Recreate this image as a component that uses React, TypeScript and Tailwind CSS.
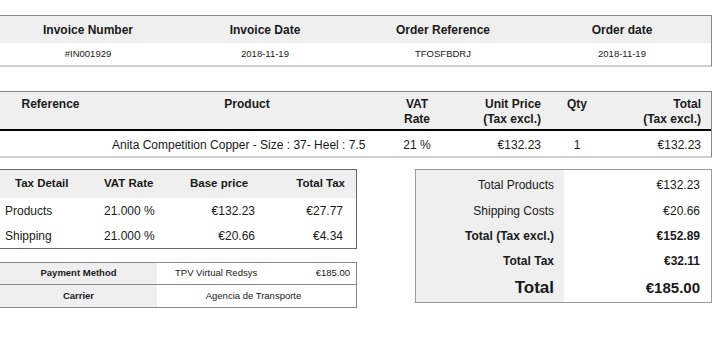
const font = "font-['Liberation_Sans','Arial',sans-serif]"

function InvoiceHeader() {
  const cols = ['Invoice Number', 'Invoice Date', 'Order Reference', 'Order date']
  const vals = ['#IN001929', '2018-11-19', 'TFOSFBDRJ', '2018-11-19']
  return (
    <div className="w-[712px] border-t border-r border-[#888] border-b-2 border-b-[#cfcfcf]">
      <div className="grid grid-cols-[176px_178px_178px_180px] h-[27px] items-center bg-[#efefef] text-[12px] font-bold text-center">
        {cols.map((c) => (
          <div key={c}>{c}</div>
        ))}
      </div>
      <div className="grid grid-cols-[176px_178px_178px_180px] h-[22px] items-center text-[9.5px] text-center">
        {vals.map((v, i) => (
          <div key={i}>{v}</div>
        ))}
      </div>
    </div>
  )
}

function ProductTable() {
  const grid = 'grid grid-cols-[101px_292px_48px_110px_52px_109px]'
  return (
    <div className="mt-[24px] w-[712px] border-t border-r border-[#888] border-b-2 border-b-[#cfcfcf]">
      <div className={`${grid} h-[39px] bg-[#efefef] pt-[5px] text-[12px] font-bold leading-[15px] border-b-2 border-black`}>
        <div className="text-center">Reference</div>
        <div className="text-center">Product</div>
        <div className="text-center">
          VAT
          <br />
          Rate
        </div>
        <div className="text-right pr-[10px]">
          Unit Price
          <br />
          (Tax excl.)
        </div>
        <div className="text-center">Qty</div>
        <div className="text-right pr-[11px]">
          Total
          <br />
          (Tax excl.)
        </div>
      </div>
      <div className={`${grid} h-[25px] pt-[2px] items-center text-[12px]`}>
        <div />
        <div className="pl-[11px] whitespace-nowrap">Anita Competition Copper - Size : 37- Heel : 7.5</div>
        <div className="text-center">21 %</div>
        <div className="text-right pr-[10px]">€132.23</div>
        <div className="text-center">1</div>
        <div className="text-right pr-[11px]">€132.23</div>
      </div>
    </div>
  )
}

function TaxTable() {
  const grid = 'grid grid-cols-[90px_90px_85px_91px]'
  const rows = [
    ['Products', '21.000 %', '€132.23', '€27.77'],
    ['Shipping', '21.000 %', '€20.66', '€4.34'],
  ]
  return (
    <div className="w-[357px] border border-l-0 border-[#666]">
      <div className={`${grid} h-[28px] items-center bg-[#efefef] text-[11.5px] font-bold`}>
        <div className="pl-[15px]">Tax Detail</div>
        <div className="pl-[14px]">VAT Rate</div>
        <div className="pl-[10px]">Base price</div>
        <div className="text-right pr-[11px]">Total Tax</div>
      </div>
      {rows.map((r) => (
        <div key={r[0]} className={`${grid} h-[25px] items-center text-[12px]`}>
          <div className="pl-[5px]">{r[0]}</div>
          <div className="pl-[14px]">{r[1]}</div>
          <div className="text-right pr-[10px]">{r[2]}</div>
          <div className="text-right pr-[13px]">{r[3]}</div>
        </div>
      ))}
    </div>
  )
}

function PaymentTable() {
  return (
    <div className="mt-[13px] w-[357px] border border-l-0 border-[#888] text-[9.5px]">
      <div className="grid grid-cols-[157px_199px] h-[22px] border-b border-[#888]">
        <div className="flex items-center justify-center bg-[#efefef] font-bold">Payment Method</div>
        <div className="flex items-center justify-between pl-[18px] pr-[6px]">
          <span>TPV Virtual Redsys</span>
          <span>€185.00</span>
        </div>
      </div>
      <div className="grid grid-cols-[157px_199px] h-[22px]">
        <div className="flex items-center justify-center bg-[#efefef] font-bold">Carrier</div>
        <div className="flex items-center justify-center pr-[6px]">Agencia de Transporte</div>
      </div>
    </div>
  )
}

function Totals() {
  const rows = [
    { label: 'Total Products', value: '€132.23', h: 'h-[28px] pt-[2px]', l: 'text-[12px]', v: 'text-[12px]' },
    { label: 'Shipping Costs', value: '€20.66', h: 'h-[25px]', l: 'text-[12px]', v: 'text-[12px]' },
    { label: 'Total (Tax excl.)', value: '€152.89', h: 'h-[25px]', l: 'text-[12px] font-bold', v: 'text-[12px] font-bold' },
    { label: 'Total Tax', value: '€32.11', h: 'h-[26px]', l: 'text-[12px] font-bold', v: 'text-[12px] font-bold' },
    { label: 'Total', value: '€185.00', h: 'h-[28px]', l: 'text-[17px] font-bold', v: 'text-[15px] font-bold' },
  ]
  return (
    <div className="ml-[58px] w-[297px] self-start border border-[#999] bg-[linear-gradient(to_right,#efefef_148px,#fff_148px)]">
      {rows.map((r) => (
        <div key={r.label} className={`grid grid-cols-[148px_147px] ${r.h}`}>
          <div className={`flex items-center justify-end pr-[10px] ${r.l}`}>{r.label}</div>
          <div className={`flex items-center justify-end pr-[11px] ${r.v}`}>{r.value}</div>
        </div>
      ))}
    </div>
  )
}

export default function App() {
  return (
    <div className={`${font} w-[720px] h-[349px] overflow-hidden bg-white pt-[15px] text-[#1a1a1a]`}>
      <InvoiceHeader />
      <ProductTable />
      <div className="mt-[11px] flex">
        <div className="flex flex-col">
          <TaxTable />
          <PaymentTable />
        </div>
        <Totals />
      </div>
    </div>
  )
}
